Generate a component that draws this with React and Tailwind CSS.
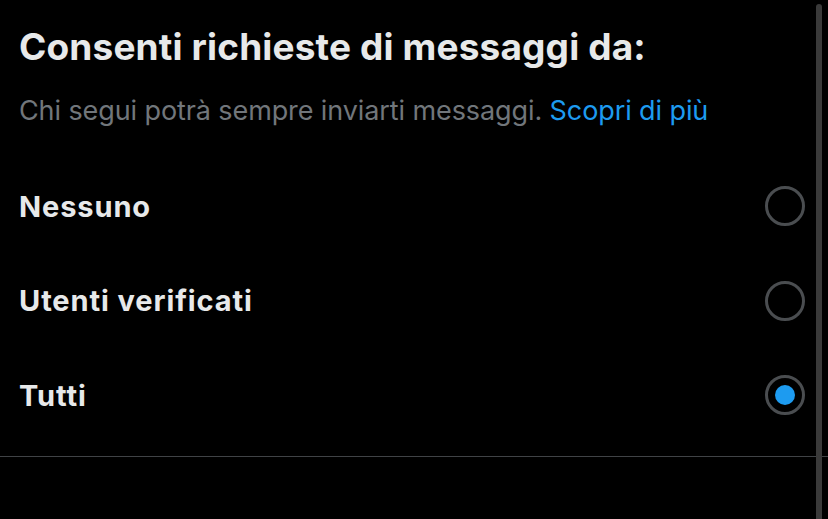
import React from "react";

function Radio({ checked }) {
  return (
    <div className="w-[40px] h-[40px] rounded-full border-[3px] border-[#4a4d50] flex items-center justify-center shrink-0">
      {checked && <div className="w-[20px] h-[20px] rounded-full bg-[#1d9bf0]" />}
    </div>
  );
}

export default function App() {
  const options = [
    { label: "Nessuno", checked: false },
    { label: "Utenti verificati", checked: false },
    { label: "Tutti", checked: true },
  ];
  return (
    <div className="relative w-[828px] h-[519px] bg-black overflow-hidden" style={{ fontFamily: "Inter, 'Noto Sans', sans-serif" }}>
      <div className="pl-[19px] pr-[23px] pt-[25px]">
        <h1 className="text-[37px] leading-[44px] font-bold text-[#e7e9ea] tracking-[0.15px]">
          Consenti richieste di messaggi da:
        </h1>
        <p className="mt-[26px] text-[27px] leading-[32px] text-[#71767b] tracking-[-0.1px]">
          Chi segui potrà sempre inviarti messaggi. <span className="text-[#1d9bf0]">Scopri di più</span>
        </p>
      </div>
      <div className="flex flex-col pl-[19px] pr-[23px] mt-[32px]">
        {options.map((o) => (
          <div key={o.label} className="flex items-center justify-between h-[94.5px]">
            <span className="text-[29px] font-bold tracking-[0.9px] text-[#e7e9ea]">{o.label}</span>
            <Radio checked={o.checked} />
          </div>
        ))}
      </div>
      <div className="h-px bg-[#404346] mt-[13px]" />
      <div className="absolute right-[6px] top-[4px] bottom-0 w-[6px] rounded-t-full bg-[#3a3a3a]" />
    </div>
  );
}
